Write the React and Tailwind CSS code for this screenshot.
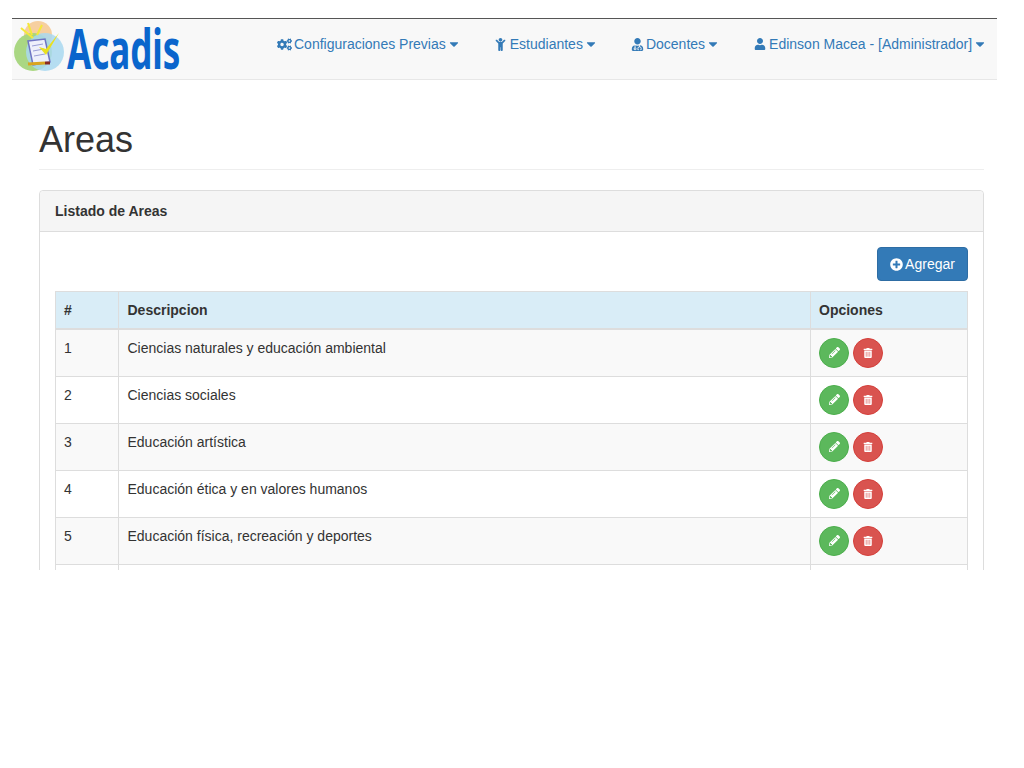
import { FaCogs, FaChild, FaUserMd, FaUser, FaCaretDown, FaPlusCircle, FaPencilAlt, FaTrashAlt } from "react-icons/fa";

const areas = [
  "Ciencias naturales y educación ambiental",
  "Ciencias sociales",
  "Educación artística",
  "Educación ética y en valores humanos",
  "Educación física, recreación y deportes",
];

const Logo = () => (
  <div className="flex items-center w-[170px] h-[60px] ml-[1px] shrink-0">
    <svg width="170" height="60" viewBox="0 0 170 60">
      <circle cx="25" cy="16" r="14" fill="#f6cfa0" />
      <circle cx="20" cy="33" r="19" fill="#a5d57c" opacity="0.95" />
      <circle cx="32" cy="33" r="19" fill="#a9d8f0" opacity="0.85" />
      <path d="M8 9l12 10M15 4l4 12M29 6l-5 10" stroke="#f4e93a" strokeWidth="2" fill="none" />
      <path d="M15 22l17-2 5 23-17 3z" fill="#eef0fb" stroke="#6f74c4" strokeWidth="1.5" />
      <path d="M19 27l11-2M20 32l11-2M21 37l11-2" stroke="#9a9ed6" strokeWidth="1" />
      <path d="M26 28l7 8L46 14 33 30z" fill="#e9e020" />
      <path d="M15 45l17-1" stroke="#d9a520" strokeWidth="3" />
      <path d="M32 44l5 0" stroke="#8a2a20" strokeWidth="3" />
      <text transform="translate(54 50) scale(1 1.6)" fill="#0a65cc" fontSize="35" fontWeight="700" fontFamily="'Noto Sans', sans-serif">Acadis</text>
    </svg>
  </div>
);

const NavItem = ({ icon, label, className }) => (
  <a className={`flex items-center text-[#337ab7] whitespace-nowrap ${className}`}>
    {icon}
    <span>{label}</span>
    <FaCaretDown className="text-[14px] ml-[1px]" />
  </a>
);

const App = () => {
  return (
    <div className="h-[570px] overflow-hidden bg-white text-[14px] leading-[20px] text-[#333] font-['Liberation_Sans',Arial,sans-serif]">
      <div className="pt-[18px] px-[12px] w-[1009px]">
        <nav className="flex items-center h-[62px] bg-[#f8f8f8] border-t border-t-[#555] border-b border-b-[#e7e7e7]">
          <Logo />
          <div className="flex items-center pb-[10px]">
            <NavItem className="ml-[94px]" icon={<FaCogs className="text-[15px] mr-[2px]" />} label="Configuraciones Previas" />
            <NavItem className="ml-[33px]" icon={<FaChild className="text-[13px] mr-[3px]" />} label="Estudiantes" />
            <NavItem className="ml-[33px]" icon={<FaUserMd className="text-[13px] mr-[2px]" />} label="Docentes" />
            <NavItem className="ml-[34px]" icon={<FaUser className="text-[12px] mr-[3px]" />} label="Edinson Macea - [Administrador]" />
          </div>
        </nav>
        <div className="pl-[27px] pr-[13px]">
          <div className="mt-[40px] pb-[9px] border-b border-[#eee]">
            <h1 className="text-[36px] leading-[40px] font-normal">Areas</h1>
          </div>
          <div className="mt-[20px] border border-[#ddd] rounded-[4px]">
            <div className="h-[41px] flex items-center px-[15px] bg-[#f5f5f5] border-b border-[#ddd] rounded-t-[4px] font-bold">
              Listado de Areas
            </div>
            <div className="p-[15px]">
              <div className="flex justify-end mb-[10px]">
                <button className="flex items-center justify-center w-[91px] h-[34px] bg-[#337ab7] border border-[#2e6da4] rounded-[4px] text-white">
                  <FaPlusCircle className="text-[13px] mr-[2px]" />
                  Agregar
                </button>
              </div>
              <table className="w-[913px] border-collapse table-fixed">
                <thead>
                  <tr className="bg-[#d9edf7] h-[37px] text-left font-bold">
                    <th className="w-[63px] px-[8px] border border-[#ddd] border-b-2">#</th>
                    <th className="pl-[8.5px] pr-[8px] border border-[#ddd] border-b-2">Descripcion</th>
                    <th className="w-[157px] px-[8px] border border-[#ddd] border-b-2">Opciones</th>
                  </tr>
                </thead>
                <tbody>
                  {areas.map((area, i) => (
                    <tr key={i} className={i % 2 === 0 ? "bg-[#f9f9f9]" : "bg-white"}>
                      <td className="h-[47px] p-[8px] align-top border border-[#ddd]">{i + 1}</td>
                      <td className="h-[47px] py-[8px] pl-[8.5px] pr-[8px] align-top border border-[#ddd]">{area}</td>
                      <td className="h-[47px] p-[8px] align-top border border-[#ddd]">
                        <div className="flex gap-[4px]">
                          <button className="flex items-center justify-center w-[30px] h-[30px] rounded-full bg-[#5cb85c] border border-[#4cae4c] text-white">
                            <FaPencilAlt className="text-[11px]" />
                          </button>
                          <button className="flex items-center justify-center w-[30px] h-[30px] rounded-full bg-[#d9534f] border border-[#d43f3a] text-white">
                            <FaTrashAlt className="text-[10px]" />
                          </button>
                        </div>
                      </td>
                    </tr>
                  ))}
                  {/* next row is cut by the page edge, only its borders show */}
                  <tr className="bg-white">
                    <td className="h-[47px] border border-[#ddd]"></td>
                    <td className="h-[47px] border border-[#ddd]"></td>
                    <td className="h-[47px] border border-[#ddd]"></td>
                  </tr>
                </tbody>
              </table>
            </div>
          </div>
        </div>
      </div>
    </div>
  );
};

export default App;
